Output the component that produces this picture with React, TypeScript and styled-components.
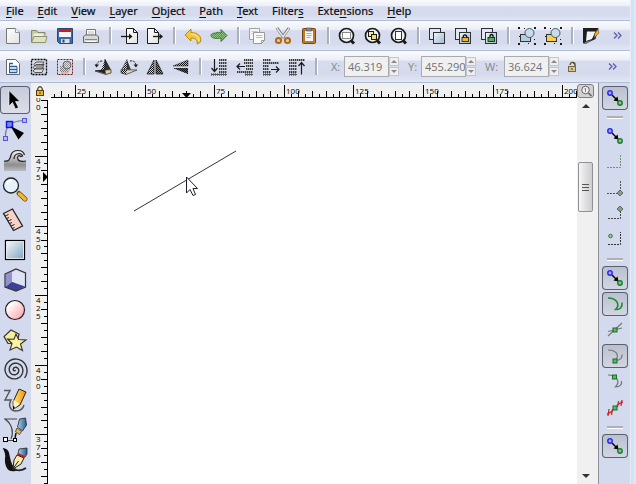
import React from "react";
import styled, { createGlobalStyle, css } from "styled-components";

const Global = createGlobalStyle`
  * { box-sizing: border-box; }
  html, body, #root { height: 100%; }
  body { margin: 0; overflow: hidden; font-family: "Open Sans", "Noto Sans", sans-serif; font-size: 11px; color: #111; }
  button, input { font: inherit; color: inherit; margin: 0; padding: 0; }
`;

/* ---------- layout ---------- */

const Screen = styled.div`
  display: flex;
  height: 100vh;
  background: #dbe9f6;
`;
const Window = styled.div`
  flex: 1;
  min-width: 0;
  display: flex;
  flex-direction: column;
  background: #d3daed;
  border-right: 1px solid #e6edf8;
`;
const Edge = styled.div`
  width: 5px;
  background: linear-gradient(90deg, #cfe0f0, #dcebf8);
`;
const bar = css`
  display: flex;
  align-items: center;
  border-bottom: 1px solid #afbdd8;
  background: linear-gradient(#fafbfe 0, #eceff8 28%, #d6dcee 34%, #d5dbed 75%, #e2e7f4 100%);
`;
const MenuBar = styled.nav`
  ${bar}
  height: 21px;
  padding: 2px 0 0 6px;
  gap: 14px;
`;
const MenuItem = styled.button`
  border: 0;
  background: none;
  line-height: 18px;
  font-family: "Noto Sans", "Open Sans", sans-serif;
  font-size: 11px;
  color: #0c0c12;
  -webkit-text-stroke: 0.2px #0c0c12;
  white-space: nowrap;
`;
const Accel = styled.u`
  text-underline-offset: 2px;
`;
const ToolBar = styled.div<{ $tall?: boolean }>`
  ${bar}
  height: ${(p) => (p.$tall ? 32 : 30)}px;
`;
const IconButton = styled.button`
  width: 26px;
  height: 26px;
  flex: none;
  border: 0;
  background: none;
  display: grid;
  place-items: center;
`;
const Divider = styled.span`
  flex: none;
  width: 12px;
  height: 17px;
  display: flex;
  justify-content: center;
  &::before {
    content: "";
    width: 2px;
    background: #adb0b8;
    border-right: 1px solid #fff;
  }
`;
const More = styled.button<{ $inset?: boolean }>`
  width: 28px;
  margin-left: auto;
  margin-right: ${(p) => (p.$inset ? 4 : 0)}px;
  height: 24px;
  border: 0;
  background: none;
  display: grid;
  place-items: center;
`;
const Field = styled.div`
  display: flex;
  align-items: center;
  margin-left: 9px;
  color: #85868a;
`;
const FieldLabel = styled.label<{ $w: number }>`
  width: ${(p) => p.$w}px;
`;
const FieldInput = styled.input`
  width: 45px;
  height: 21px;
  padding-left: 3px;
  border: 1px solid #a9abb3;
  background: #f0f0f0;
  color: #6f7073;
  outline: none;
`;
const Spinner = styled.div`
  display: flex;
  flex-direction: column;
  width: 10px;
  gap: 1px;
`;
const Step = styled.button`
  height: 9px;
  border: 1px solid #c3c5ca;
  background: #efefef;
  display: grid;
  place-items: center;
`;

const Workspace = styled.main`
  flex: 1;
  min-height: 0;
  display: grid;
  grid-template-columns: 31px 17px minmax(0, 1fr) 22px 31px;
  grid-template-rows: 15px minmax(0, 1fr);
`;
const Toolbox = styled.div`
  grid-row: 1 / 3;
  overflow: hidden;
  padding-top: 2px;
  display: flex;
  flex-direction: column;
`;
const Tool = styled.button<{ $on?: boolean }>`
  flex: none;
  display: grid;
  place-items: center;
  width: 30px;
  height: ${(p) => (p.$on ? 28 : 30)}px;
  margin: ${(p) => (p.$on ? 1 : 0)}px 0;
  border: 0;
  border-radius: 4px;
  background: ${(p) => (p.$on ? "linear-gradient(#c6cbd9, #dcdfe9)" : "none")};
  box-shadow: ${(p) => (p.$on ? "inset 0 0 0 1px #5b606c" : "none")};
`;
const Corner = styled.button`
  border: 0;
  background: #f0f0f0;
  display: grid;
  place-items: center;
`;
const RulerBox = styled.div`
  background: #f0f0f0;
  overflow: hidden;
  svg { display: block; width: 100%; height: 100%; }
  text { font-size: 8px; fill: #000; }
`;
const Canvas = styled.section`
  background: #fff;
  overflow: hidden;
  svg { display: block; }
`;
const ZoomButton = styled.button`
  justify-self: start;
  align-self: start;
  width: 17px;
  height: 14px;
  margin-top: 1px;
  border: 1px solid #7c7e82;
  border-radius: 3px;
  background: #d2d2d2;
  display: grid;
  place-items: center;
`;
const ZoomCell = styled.div`
  background: #f0f0f0;
  border-right: 1px solid #8d8f96;
  display: grid;
`;
const ScrollColumn = styled.div`
  background: #f0f0f0;
  border-right: 1px solid #8d8f96;
  display: flex;
  flex-direction: column;
  align-items: center;
  padding-right: 4px;
`;
const ScrollArrow = styled.button`
  width: 16px;
  height: 16px;
  border: 0;
  background: none;
  display: grid;
  place-items: center;
`;
const Track = styled.div`
  flex: 1;
  width: 100%;
  padding: 48px 1px 0;
`;
const Thumb = styled.div`
  height: 50px;
  border: 1px solid #8f9196;
  border-radius: 2px;
  background: linear-gradient(90deg, #f6f6f6, #e0e0e1 50%, #cdced1);
  display: grid;
  place-items: center;
`;
const SnapBar = styled.div`
  grid-column: 5;
  grid-row: 1 / 3;
  padding: 2px 0 0 3px;
  overflow: hidden;
  display: flex;
  flex-direction: column;
`;
const Snap = styled.button<{ $on?: boolean }>`
  flex: none;
  display: grid;
  place-items: center;
  width: 26px;
  height: 24px;
  margin: 1px 0;
  border: 0;
  border-radius: 4px;
  background: ${(p) => (p.$on ? "linear-gradient(#b9bfce, #d3d7e2)" : "none")};
  box-shadow: ${(p) => (p.$on ? "inset 0 0 0 1px #5b606c" : "none")};
`;
const SnapRule = styled.div`
  flex: none;
  height: 12px;
  width: 26px;
  display: grid;
  place-items: center;
  &::before {
    content: "";
    width: 16px;
    height: 2px;
    background: #aeb0b6;
    border-bottom: 1px solid #fff;
  }
`;

/* ---------- icon parts ---------- */

const K = "#1a1a1a";

const I22 = ({ children }: { children: React.ReactNode }) => (
  <svg width="22" height="22" viewBox="0 0 22 22" fill="none" aria-hidden="true">
    <defs>
      <pattern id="dots" width="2" height="2" patternUnits="userSpaceOnUse">
        <rect width="1" height="1" fill="#111" />
        <rect x="1" y="1" width="1" height="1" fill="#111" />
      </pattern>
      <linearGradient id="paper" x1="0" y1="0" x2="1" y2="1">
        <stop offset="0" stopColor="#fff" />
        <stop offset="1" stopColor="#e2e2e2" />
      </linearGradient>
      <linearGradient id="sky" x1="0" y1="0" x2="1" y2="1">
        <stop offset="0" stopColor="#f0f6fb" />
        <stop offset="1" stopColor="#9fb7cc" />
      </linearGradient>
    </defs>
    {children}
  </svg>
);
const I28 = ({ children }: { children: React.ReactNode }) => (
  <svg width="28" height="28" viewBox="0 0 28 28" fill="none" aria-hidden="true">
    <defs>
      <linearGradient id="tsky" x1="0" y1="0" x2="1" y2="1">
        <stop offset="0" stopColor="#eef5fa" />
        <stop offset="1" stopColor="#86a9c4" />
      </linearGradient>
      <linearGradient id="tpink" x1="0" y1="0" x2="1" y2="1">
        <stop offset="0.2" stopColor="#fff" />
        <stop offset="1" stopColor="#ff9aa4" />
      </linearGradient>
      <linearGradient id="tgold" x1="0" y1="0" x2="1" y2="0">
        <stop offset="0" stopColor="#ffe27a" />
        <stop offset="1" stopColor="#e8960c" />
      </linearGradient>
      <linearGradient id="tgrey" x1="0" y1="0" x2="0" y2="1">
        <stop offset="0" stopColor="#f4f4f4" />
        <stop offset="0.7" stopColor="#8e8e8e" />
        <stop offset="1" stopColor="#b9bcc4" />
      </linearGradient>
      <linearGradient id="tsteel" x1="0" y1="0" x2="1" y2="0">
        <stop offset="0" stopColor="#a9d4ee" />
        <stop offset="1" stopColor="#2b5c86" />
      </linearGradient>
    </defs>
    {children}
  </svg>
);

const Loupe = ({ children }: { children: React.ReactNode }) => (
  <I22>
    <path d="M15 15.500 18 18.500" stroke={K} strokeWidth="3" />
    <circle cx="10.500" cy="10.500" r="7" fill="#edf1f6" stroke={K} strokeWidth="1.700" />
    {children}
  </I22>
);
const Squares = ({ children }: { children?: React.ReactNode }) => (
  <I22>
    <rect x="3.500" y="3.500" width="11" height="11" fill="#dfe8f0" stroke="#2d3135" />
    <rect x="7.500" y="7.500" width="11" height="11" fill="url(#sky)" stroke="#2d3135" />
    {children}
  </I22>
);
const Padlock = ({ c, open }: { c: string; open?: boolean }) => (
  <>
    <path d={open ? "M12 12v-1.500q1.500-2 3 0V13" : "M11.300 13v-2q1.700-2.400 3.400 0v2"} stroke="#111" strokeWidth="1.300" />
    <rect x="10" y="12.500" width="6.500" height="4" fill={c} stroke="#111" strokeWidth="0.8" />
  </>
);
const GroupMarks = () => (
  <path d="M2 2h2v2H2zM18 2h2v2h-2zM2 18h2v2H2zM18 18h2v2h-2zM8 3h1v1H8zM3 11h1v1H3zM12 18h1v1h-1zM18 14h1v1h-1z" fill={K} />
);

/* ---------- command bar icons ---------- */

const redoShape = "m19 10.500-6-6V8c-2-1-4-1-5 0C5 8 2.500 9 3 11c1 2.500 5 3 10 2v3.500z";
const cmd: Record<string, React.ReactNode> = {
  New: <I22><path d="M4.500 3.500h9l4 4v11h-13z" fill="url(#paper)" stroke="#777" /><path d="M13.500 3.500v4h4" stroke="#999" fill="#fff" /></I22>,
  Open: (
    <I22>
      <path d="M3.500 17.500v-12h5l1.500 2h7v3" fill="#c4c8a0" stroke="#85896b" />
      <path d="M5.500 8.500h10v4h-10z" fill="#eef0de" />
      <path d="M3.500 17.500 6 11.500h13l-1.500 6z" fill="#dfe3bd" stroke="#8d9172" />
    </I22>
  ),
  Save: (
    <I22>
      <path d="M3.500 3.500h15v15h-13l-2-2z" fill="#3c6aa6" stroke="#234a7c" />
      <path d="M5 4h12v8H5z" fill="#f4f4f4" /><path d="M5 4h12v3H5z" fill="#dc1414" />
      <path d="M7 14h8.500v4H7z" fill="#ddd" /><path d="M8.500 14.500h2v3h-2z" fill="#24497b" />
    </I22>
  ),
  Print: (
    <I22>
      <path d="M6.500 11V4.500h9V11" fill="#fff" stroke="#777" />
      <path d="M8 7h6M8 9h6" stroke="#bbb" />
      <path d="M3.500 11.500 5.500 10h11l2 1.500v6h-15z" fill="#d8d8d8" stroke="#666" />
      <path d="M5 14.500h12" stroke="#888" /><path d="M6 16.500h10" stroke="#fff" />
    </I22>
  ),
  Import: (
    <I22>
      <path d="M8.500 3.500h7l4 4v11h-11z" fill="url(#paper)" stroke={K} />
      <path d="M15.500 3.500v4h4" stroke={K} /><path d="M3 11.500h10" stroke={K} strokeWidth="1.300" /><path d="m11 8.500 3.500 3-3.500 3z" fill={K} />
    </I22>
  ),
  Export: (
    <I22>
      <path d="M3.500 3.500h7l4 4v11h-11z" fill="url(#paper)" stroke={K} />
      <path d="M10.500 3.500v4h4" stroke={K} /><path d="M9 11.500h9" stroke={K} strokeWidth="1.300" /><path d="m15.500 8.500 3.500 3-3.500 3z" fill={K} />
    </I22>
  ),
  Undo: <I22><path d="M3 10 9 4v3.500c7 0 11 4 9.500 9.500l-3.500 2c1-3-1-6-6-6V16z" fill="#f5c83c" stroke="#b98b16" /><path d="M9 9c5 0 8 3 8 7" stroke="#fdf0a8" /></I22>,
  Redo: <I22><path d={redoShape} fill="#8ec27c" stroke="#4b7d43" /><path d={redoShape} fill="url(#dots)" opacity=".3" /></I22>,
  Copy: (
    <I22>
      <path d="M3.500 3.500h10v11h-10z" fill="#f5f5f5" stroke="#a2a2a2" /><path d="M5.500 6.500h6M5.500 8.500h6" stroke="#c5c5c5" />
      <path d="M7.500 7.500h11v8l-3 3h-8z" fill="#fafafa" stroke="#999" /><path d="M10 10.500h6.500M10 12.500h6.500" stroke="#bbb" /><path d="M15.500 18.500v-3h3" stroke="#999" />
    </I22>
  ),
  Cut: (
    <I22>
      <path d="m5 3 7 10M17 3l-7 10" stroke="#777" strokeWidth="3" /><path d="m5 3.500 6.500 9M17 3.500l-6.500 9" stroke="#e8e8e8" strokeWidth="1.400" />
      <ellipse cx="6.500" cy="15.500" rx="2.600" ry="2.600" fill="#e9c79a" stroke="#b06a1c" strokeWidth="2" /><ellipse cx="15.500" cy="15.500" rx="2.600" ry="2.600" fill="#e9c79a" stroke="#b06a1c" strokeWidth="2" />
    </I22>
  ),
  Paste: (
    <I22>
      <rect x="4.500" y="3.500" width="13" height="15" rx="1" fill="#b97a2b" stroke="#77450f" />
      <path d="M7 6h8v10H7z" fill="#f7f7f7" /><path d="M8.500 3h5v3h-5z" fill="#888" stroke="#555" strokeWidth=".7" /><path d="M8.500 8.500h5M8.500 10.500h5M8.500 12.500h4" stroke="#aaa" />
    </I22>
  ),
  "Zoom to selection": <Loupe><rect x="6.500" y="7.500" width="8" height="6" fill="#fff" stroke={K} strokeDasharray="1 1" /></Loupe>,
  "Zoom to drawing": <Loupe><rect x="6.500" y="6.500" width="5" height="5" fill="#f7eaa8" stroke={K} /><rect x="9.500" y="9.500" width="5" height="5" fill="#f4dc68" stroke={K} /></Loupe>,
  "Zoom to page": <Loupe><rect x="7.500" y="6.500" width="6" height="8" fill="#fff" stroke="#333" /></Loupe>,
  Duplicate: <Squares />,
  Clone: <Squares><Padlock c="#f5b52a" /></Squares>,
  "Unlink clone": <Squares><Padlock c="#53b153" open /></Squares>,
  Group: <I22><rect x="4.500" y="9.500" width="10" height="7" fill="#b5cde0" stroke="#333" /><circle cx="13.500" cy="8" r="4.500" fill="#c7dbea" stroke="#4a5a68" /><GroupMarks /></I22>,
  Ungroup: <I22><rect x="4.500" y="9.500" width="10" height="7" fill="#f7cf4a" stroke="#333" /><circle cx="13.500" cy="8" r="4.500" fill="#c7dbea" stroke="#4a5a68" /><GroupMarks /></I22>,
  "Fill and stroke": (
    <I22>
      <path d="M3 3h15.500l-3 11L5 19l-2-1z" fill="#1d1d1d" /><path d="M7 6.500h8.500L12 14l-6 2z" fill="#f2f4f7" /><path d="m3 19 3-2.500 6-1.500-6 4z" fill="#777" />
      <path d="m18 4 .8 4-4.800 5 1-5z" fill="#efb52a" stroke="#6b4a07" strokeWidth=".6" />
    </I22>
  ),
};

/* ---------- tool controls icons ---------- */

const Lines = ({ rows, arrow }: { rows: string; arrow: string }) => (
  <I22>
    <path d={rows} stroke="#222" strokeWidth="2" strokeDasharray="1 1" />
    <path d={rows} stroke="#555" strokeWidth="1" />
    <path d={arrow} stroke={K} strokeWidth="1.200" />
  </I22>
);
const ctl: Record<string, React.ReactNode> = {
  "Select all": <I22><path d="M4.500 3.500h9l4 4v11h-13z" fill="#fff" stroke="#667" /><path d="M7 7.500h4M7 10.500h8M7 13.500h8M7 16.500h8" stroke="#2b5f9e" strokeWidth="1.400" /><path d="M7.500 7v9.500M15 10.500v6" stroke="#2b5f9e" /></I22>,
  "Select in all layers": (
    <I22>
      <rect x="3.500" y="3.500" width="15" height="15" stroke="#000" strokeWidth="1.300" strokeDasharray="2 1" />
      <path d="m5 15 3-3h8l-2 4.500H7zM5 11.500l3-3h8L14 13H7zM6 8.500 8 6h8l-2 4H7z" fill="#ddd" stroke="#444" strokeWidth=".9" />
    </I22>
  ),
  Deselect: (
    <I22>
      <rect x="3.500" y="3.500" width="15" height="15" stroke="#6c1c1c" strokeDasharray="2 1" />
      <path d="M6 10h8v6H6z" fill="url(#dots)" opacity=".5" /><circle cx="13" cy="9" r="4" fill="#ddd" stroke="#777" /><circle cx="13" cy="9" r="4" fill="url(#dots)" opacity=".35" />
      <path d="M7 17h6l3-4" stroke="#c9a257" />
    </I22>
  ),
  "Rotate left": <I22><path d="M4.500 9.500Q5 5 10.500 5" stroke={K} strokeDasharray="2 1" /><path d="m2.500 8.500 2 3 2.500-3z" fill={K} /><path d="M13 3.500v10.500L18 13z" fill="#333" stroke="#222" /><path d="M13 4 9 14l4 1z" fill="url(#dots)" /><path d="m3 15 11 3.500 5-1.500v-3.500z" fill="#e3cf9f" stroke="#333" strokeWidth=".8" /><path d="m3 14.500 10-1 1 4.500z" fill="#222" /></I22>,
  "Rotate right": <I22><path d="M12 5q5-1 6 4" stroke={K} strokeDasharray="2 1" /><path d="m15.500 8.500 2.500 3 2-3z" fill={K} /><path d="M9 3.500V14l-5-1z" fill="url(#dots)" stroke="#555" strokeWidth=".6" /><path d="m9 4 4 10-4 1z" fill="#333" /><path d="m19 14-11 4.500-5-1.500v-3.500z" fill="#dcd5c0" stroke="#444" strokeWidth=".8" /><path d="M3 14h6l-1 4-5-1z" fill="url(#dots)" /></I22>,
  "Flip horizontal": <I22><path d="M10 4v14H3z" fill="url(#dots)" stroke="#222" strokeWidth=".8" /><path d="M12 4v14h7z" fill="#999" stroke="#222" strokeWidth=".8" /><path d="M12 4v14h7z" fill="url(#dots)" /></I22>,
  "Flip vertical": <I22><path d="M18 4v6H3z" fill="#bbb" stroke="#444" strokeWidth=".6" /><path d="M18 4v6H3z" fill="url(#dots)" /><path d="M3 12h15v6z" fill="#555" /><path d="M3 12h15v6z" fill="url(#dots)" /></I22>,
  "Lower to bottom": <Lines rows="M11 4h8M11 7h8M11 10h8M11 13h8M11 16h8M3 18.500h16" arrow="M6.500 3v12M3.500 12l3 3.500 3-3.500" />,
  Lower: <Lines rows="M10 4h9M10 7h9M12 10h7M12 13h7M3 16h16M11 18.500h8" arrow="M3 10.500h8M6 7.500l-3 3 3 3" />,
  Raise: <Lines rows="M3 4h8M3 7h16M3 10h6M3 13h6M3 16h8M3 18.500h8" arrow="M11 13.500h8M16 10.500l3 3-3 3" />,
  "Raise to top": <Lines rows="M3 4h16M3 7h8M3 10h8M3 13h8M3 16h8M3 18.500h8" arrow="M15.500 18.500V7M12.500 10l3-3.500 3 3.500" />,
};

/* ---------- toolbox icons ---------- */

const spiral = Array.from({ length: 91 }, (_, i) => {
  const a = ((40 - 1080 + i * 12) * Math.PI) / 180;
  const r = (12.5 * i) / 90;
  return `${i ? "L" : "M"}${(14 + r * Math.cos(a)).toFixed(1)} ${(14 + r * Math.sin(a)).toFixed(1)}`;
}).join("");

const tools: [string, React.ReactNode][] = [
  ["Select", <I28><path d="M8 4.500V20l3.500-3.500 3 6.500 3-1.500-3-6h4.500z" fill="#000" stroke="#fff" strokeWidth=".6" /></I28>],
  ["Edit nodes", <I28><path d="M4.500 22C4 14 6 5 23 4.500" stroke="#777" strokeWidth="1.200" /><rect x="21.500" y="2.500" width="4" height="4" fill="#b9b9f5" stroke="#5656dc" /><rect x="2.500" y="20.500" width="4" height="4" fill="#b9b9f5" stroke="#5656dc" /><rect x="5.500" y="5.500" width="6" height="6" fill="#6f8bff" stroke="#1414dc" strokeWidth="1.400" /><path d="m9.500 10 13.500 7-5.500 6.500z" fill="#000" /></I28>],
  ["Tweak", <I28><path d="M3 25V15c5 1 6-2 7-6 2-6 12-6 13.500 0l-2 1c-2-3-5-2-4.500 2 .5 4 4 3.500 8 3v10z" fill="url(#tgrey)" /><path d="M3 15c5 1 6-2 7-6 2-6 12-6 13.500 0M13 13c0-6 8-7 8.500-3l-2 .5c-1.500-2-4 0-2.500 3 1 2.500 5 2 8 1.500" stroke="#222" strokeWidth="1.200" /></I28>],
  ["Zoom", <I28><path d="m18 17.500 6 5.500" stroke="#6b5410" strokeWidth="5" strokeLinecap="round" /><path d="m18.500 18 5.500 5" stroke="#f5b430" strokeWidth="3.500" strokeLinecap="round" /><circle cx="10" cy="9.500" r="7.500" fill="#e6f1fb" stroke="#222" strokeWidth="1.300" /><path d="M6 8q1.500-3.500 5-3.500" stroke="#fff" strokeWidth="2" /></I28>],
  ["Measure", <I28><path d="m2.500 7.500 9-4.500L21.500 20l-9 4.500z" fill="#f8d2c6" stroke="#222" strokeWidth="1.300" /><path d="m4 10 3.500-1.500M5.500 12.500 8 11.500M7 15l3.500-1.500M8.500 17.500 11 16.500M10 20l3.500-1.500M11.500 22.500l2-1" stroke="#222" /></I28>],
  ["Rectangle", <I28><rect x="4.500" y="4.500" width="19" height="19" fill="#fff" stroke="#000" strokeWidth="1.200" /><rect x="6" y="6" width="16" height="16" fill="url(#tsky)" /></I28>],
  ["3D box", <I28><path d="M4.500 8.500 15 3.500V17L4.500 21z" fill="#9292cc" /><path d="M11 6 15 3.500 24 7.500V20L11 16z" fill="#dfe1f7" /><path d="M4.500 21 11 16l13 4.500-9 4.500z" fill="#3f3f96" /><path d="M4 8 15 3l9.500 4v14L15 25 4 21z" stroke="#333" strokeWidth="1.200" /></I28>],
  ["Ellipse", <I28><circle cx="14" cy="14" r="9.500" fill="url(#tpink)" stroke="#222" strokeWidth="1.200" /></I28>],
  ["Star", <I28><path d="M10 4 18 8l-2 9-9 .5-4-7z" fill="#f7ee9c" stroke="#333" strokeWidth="1.200" /><path d="m15 8 2.500 5.500 7.500.5-5.500 4 2 6.500L15.500 21 9 24l2-6.500L6.500 13l6.500.2z" fill="#fbf3a0" stroke="#333" strokeWidth="1.100" /></I28>],
  ["Spiral", <I28><path d={spiral} stroke="#333" strokeWidth="1.400" /></I28>],
  ["Pencil", <I28><path d="M3 4.500h6L4 14h6c-3 5-1 11 5 11 4 0 7-2 8-6" stroke="#555" strokeWidth="1.400" /><path d="m18 3 7 3-6 13-6.500 4-.5-7z" fill="url(#tgold)" stroke="#332200" /><path d="m12.500 14 6 4-6 5z" fill="#fff3cf" /><path d="m12 20 2 1-2 3z" fill="#000" /></I28>],
  ["Bezier", <I28><path d="M3 3h13M4 3c7 5 9 13 6 20M4 24.500h11" stroke="#444" strokeWidth="1.200" /><rect x="2.500" y="21.500" width="4" height="4" fill="#fff" stroke="#000" /><rect x="12.500" y="22.500" width="3" height="3" fill="#fff" stroke="#000" /><path d="m18.500 3 6-1 1 7-4 6-5-4z" fill="url(#tsteel)" stroke="#223" strokeWidth=".8" /><path d="m16 12 4.500 3.500-2 3-4-3z" fill="#f0b93a" stroke="#333" strokeWidth=".8" /><path d="m15 17-1 5" stroke="#111" strokeWidth="1.500" /></I28>],
  ["Calligraphy", <I28><path d="M3 3c8 1 2 15 12 21-10 3-11-8-10-14 0-3-1-5-2-7z" fill="#111" stroke="#111" strokeWidth="1.500" /><path d="M12 23c5 2 9 2 13-1" stroke="#222" strokeWidth="1.800" /><path d="m18 3 8-1v6l-2 3-7-3z" fill="url(#tsteel)" stroke="#223" strokeWidth=".8" /><path d="m17 7 7 3v2l-8-3z" fill="#c52020" /><path d="m16 9 7 3-3 6-8 5 1-9z" fill="#fbe9a6" stroke="#222" /><path d="m12.500 22 5-7" stroke="#222" /></I28>],
];

/* ---------- snap icons ---------- */

const SnapNodes = () => (
  <I22>
    <path d="m8 8 5 5" stroke="#000" strokeWidth="1.400" /><path d="m14.500 14.500-1-5-4 4z" fill="#000" />
    <circle cx="6" cy="6" r="2.200" fill="#a9a9ff" stroke="#2a2af0" strokeWidth="1.500" /><circle cx="16" cy="16" r="2.200" fill="#86c986" stroke="#1d7c34" strokeWidth="1.500" />
  </I22>
);
const Diamond = ({ x, y }: { x: number; y: number }) => (
  <path d={`M${x} ${y - 3}l3 3-3 3-3-3z`} fill="#8a9c8c" stroke="#445a48" strokeWidth=".8" />
);
const Node = ({ x, y }: { x: number; y: number }) => (
  <rect x={x - 2} y={y - 2} width="4" height="4" fill="#57b86b" stroke="#1d6b2b" />
);
const snaps: ([string, React.ReactNode, boolean] | null)[] = [
  ["Enable snapping", <SnapNodes />, true],
  null,
  ["Snap bounding boxes", <SnapNodes />, false],
  ["Snap to box edges", <I22><path d="M3 16.500h13.500V3" stroke="#6c9a6f" strokeDasharray="2 1" /></I22>, false],
  ["Snap to box corners", <I22><path d="M3 16.500h13.500V3" stroke="#555" strokeDasharray="2 1" /><Diamond x={16} y={16} /></I22>, false],
  ["Snap to edge midpoints", <I22><path d="M4 15.500h12.500V6" stroke="#444" strokeDasharray="2 1" /><Diamond x={16} y={6} /></I22>, false],
  ["Snap to box centers", <I22><path d="M4 15.500h12.500V3" stroke="#333" strokeDasharray="2 1" /><circle cx="6.500" cy="7" r="1.800" fill="#a8c8ab" stroke="#3b6b42" /></I22>, false],
  null,
  ["Snap nodes", <SnapNodes />, true],
  ["Snap to paths", <I22><path d="M4 5c8 0 13 6 7.500 11.500 5 .5 7-3 6.500-7" stroke="#1f8b36" strokeWidth="1.600" /></I22>, true],
  ["Snap to intersections", <I22><path d="m4 17 14-13M4 12.500 18 9" stroke="#777" strokeWidth="1.200" /><Node x={11} y={11} /></I22>, false],
  ["Snap to cusp nodes", <I22><path d="M4 5c8 0 12 5 7.500 10.500 5 0 7-3 6.500-6" stroke="#777" strokeWidth="1.200" /><Node x={11} y={16} /></I22>, true],
  ["Snap to smooth nodes", <I22><path d="M4 4c8 0 13 6 7.500 12 5 0 6.500-3 6-6" stroke="#777" strokeWidth="1.200" /><Node x={10.5} y={6} /></I22>, false],
  ["Snap to line midpoints", <I22><path d="m4 17.500 14-14" stroke="#888" /><path d="m5 12-1 7M8.500 12l-1 6M14.500 4l-1 6M18 3l-1 6M3 17l6-3M13 8l6-3" stroke="#cf2020" strokeWidth="1.200" /><Node x={11} y={11} /></I22>, false],
  null,
  ["Snap others", <SnapNodes />, true],
];

/* ---------- rulers ---------- */

const STEP = 69.6;
const tickList = (origin: number, count: number) =>
  Array.from({ length: count }, (_, i) => {
    const n = i - 10;
    return { at: Math.round(origin + (n * STEP) / 10), len: n % 10 === 0 ? 12 : n % 2 === 0 ? 6 : 3 };
  });
const hMarks = [25, 50, 75, 100, 125, 150, 175, 200];
const vMarks = ["475", "450", "425", "400", "375"];

const HRuler = () => (
  <svg aria-label="Horizontal ruler">
    <path d={tickList(27, 400).filter((t) => t.at > 2).map((t) => `M${t.at + 0.5} ${14}v-${t.len}`).join("")} stroke="#000" />
    <path d="M3 14.500h4000" stroke="#000" />
    {hMarks.map((m, i) => (
      <text key={m} x={Math.round(27 + i * STEP) + 2} y="11">{m}</text>
    ))}
    <path d="M134 10h9l-4.500 5z" fill="#000" />
  </svg>
);
const VRuler = () => (
  <svg aria-label="Vertical ruler">
    <path d={tickList(58, 300).filter((t) => t.at > 1).map((t) => `M16 ${t.at + 0.5}h-${t.len}`).join("")} stroke="#000" />
    <path d="M16.500 2v3000" stroke="#000" />
    <text x="5" y="4">0</text>
    <text x="5" y="12">0</text>
    {vMarks.map((m, i) =>
      m.split("").map((d, j) => (
        <text key={`${m}-${j}`} x="5" y={Math.round(58 + i * STEP) + 8 + j * 8}>{d}</text>
      ))
    )}
    <path d="M12 74v10l5-5z" fill="#000" />
  </svg>
);

/* ---------- page ---------- */

const menus: [string, string, string][] = [
  ["", "F", "ile"], ["", "E", "dit"], ["", "V", "iew"], ["", "L", "ayer"], ["", "O", "bject"],
  ["", "P", "ath"], ["", "T", "ext"], ["Filter", "s", ""], ["Exte", "n", "sions"], ["", "H", "elp"],
];
const commandOrder = [
  "New", "Open", "Save", "Print", "|", "Import", "Export", "|", "Undo", "Redo", "|", "Copy", "Cut", "Paste", "|",
  "Zoom to selection", "Zoom to drawing", "Zoom to page", "|", "Duplicate", "Clone", "Unlink clone", "|",
  "Group", "Ungroup", "|", "Fill and stroke",
];
const controlOrder = [
  "Select all", "Select in all layers", "Deselect", "|", "Rotate left", "Rotate right", "Flip horizontal", "Flip vertical", "|",
  "Lower to bottom", "Lower", "Raise", "Raise to top", "|",
];
const fields: [string, string, number][] = [["X", "46.319", 13], ["Y", "455.290", 13], ["W", "36.624", 19]];

const Items = ({ order, icons }: { order: string[]; icons: Record<string, React.ReactNode> }) => (
  <>
    {order.map((n, i) => (n === "|" ? <Divider key={i} /> : <IconButton key={n} aria-label={n}>{icons[n]}</IconButton>))}
  </>
);
const Chevrons = () => (
  <svg width="9" height="7" viewBox="0 0 9 7" fill="none" aria-hidden="true">
    <path d="m1 .5 3 3-3 3M5 .5l3 3-3 3" stroke="#5d5fae" strokeWidth="1.300" />
  </svg>
);
const Triangle = ({ down, size = 6, color = "#333" }: { down?: boolean; size?: number; color?: string }) => (
  <svg width={size} height={size / 2} viewBox="0 0 6 3" aria-hidden="true">
    <path d={down ? "M0 0h6L3 3z" : "M0 3h6L3 0z"} fill={color} />
  </svg>
);
const SmallLock = ({ open }: { open?: boolean }) => (
  <svg width="10" height="12" viewBox="0 0 10 12" fill="none" aria-hidden="true">
    <path d={open ? "M3 4q.5-3 3-2.500T8 5" : "M2.800 6V3.500q2.200-3.500 4.400 0V6"} stroke="#5a4a1c" strokeWidth="1.300" />
    <rect x="1.500" y="5.500" width="7" height="5" fill={open ? "#d9c48a" : "#f0b429"} stroke={open ? "#6f6850" : "#4c3c10"} />
    <path d="M5 7v2" stroke="#4c3c10" />
  </svg>
);

export default function App() {
  return (
    <Screen>
      <Global />
      <Window>
        <MenuBar aria-label="Main menu">
          {menus.map(([a, k, b]) => (
            <MenuItem key={a + k + b}>{a}<Accel>{k}</Accel>{b}</MenuItem>
          ))}
        </MenuBar>
        <ToolBar role="toolbar" aria-label="Commands">
          <Items order={commandOrder} icons={cmd} />
          <More aria-label="More commands"><Chevrons /></More>
        </ToolBar>
        <ToolBar $tall role="toolbar" aria-label="Tool controls">
          <Items order={controlOrder} icons={ctl} />
          {fields.map(([n, v, w]) => (
            <Field key={n}>
              <FieldLabel $w={w} htmlFor={`pos-${n}`}>{n}:</FieldLabel>
              <FieldInput id={`pos-${n}`} defaultValue={v} />
              <Spinner>
                <Step aria-label={`Increase ${n}`}><Triangle color="#888" /></Step>
                <Step aria-label={`Decrease ${n}`}><Triangle down color="#888" /></Step>
              </Spinner>
            </Field>
          ))}
          <IconButton aria-label="Lock proportions"><SmallLock open /></IconButton>
          <More $inset aria-label="More controls"><Chevrons /></More>
        </ToolBar>
        <Workspace>
          <Toolbox role="toolbar" aria-label="Toolbox">
            {tools.map(([n, icon], i) => (
              <Tool key={n} $on={i === 0} aria-label={n}>{icon}</Tool>
            ))}
          </Toolbox>
          <Corner aria-label="Lock guides"><SmallLock /></Corner>
          <RulerBox><HRuler /></RulerBox>
          <ZoomCell>
            <ZoomButton aria-label="Zoom on resize">
              <svg width="14" height="12" viewBox="0 0 14 12" fill="none" aria-hidden="true">
                <circle cx="6.500" cy="5" r="3.800" fill="#eee" stroke="#666" /><path d="m9.500 8 3 3" stroke="#666" strokeWidth="1.600" /><path d="M6.500 3v4M5.500 4h1" stroke="#888" />
              </svg>
            </ZoomButton>
          </ZoomCell>
          <SnapBar role="toolbar" aria-label="Snap controls">
            {snaps.map((s, i) => (s ? <Snap key={i} $on={s[2]} aria-label={s[0]}>{s[1]}</Snap> : <SnapRule key={i} />))}
          </SnapBar>
          <RulerBox><VRuler /></RulerBox>
          <Canvas aria-label="Drawing">
            <svg width="530" height="386" viewBox="0 0 530 386" fill="none">
              <path d="M86 113 188 53" stroke="#333" />
              <path d="M138.500 79v16l3.500-3.500 3 6 2.500-1-2.500-6h4.500z" fill="#fff" stroke="#1c1c30" />
            </svg>
          </Canvas>
          <ScrollColumn>
            <ScrollArrow aria-label="Scroll up"><Triangle size={8} /></ScrollArrow>
            <Track>
              <Thumb>
                <svg width="7" height="8" viewBox="0 0 7 8" aria-hidden="true"><path d="M0 1.500h7M0 4.500h7M0 7.500h7" stroke="#555" /></svg>
              </Thumb>
            </Track>
            <ScrollArrow aria-label="Scroll down"><Triangle down size={8} /></ScrollArrow>
          </ScrollColumn>
        </Workspace>
      </Window>
      <Edge />
    </Screen>
  );
}
